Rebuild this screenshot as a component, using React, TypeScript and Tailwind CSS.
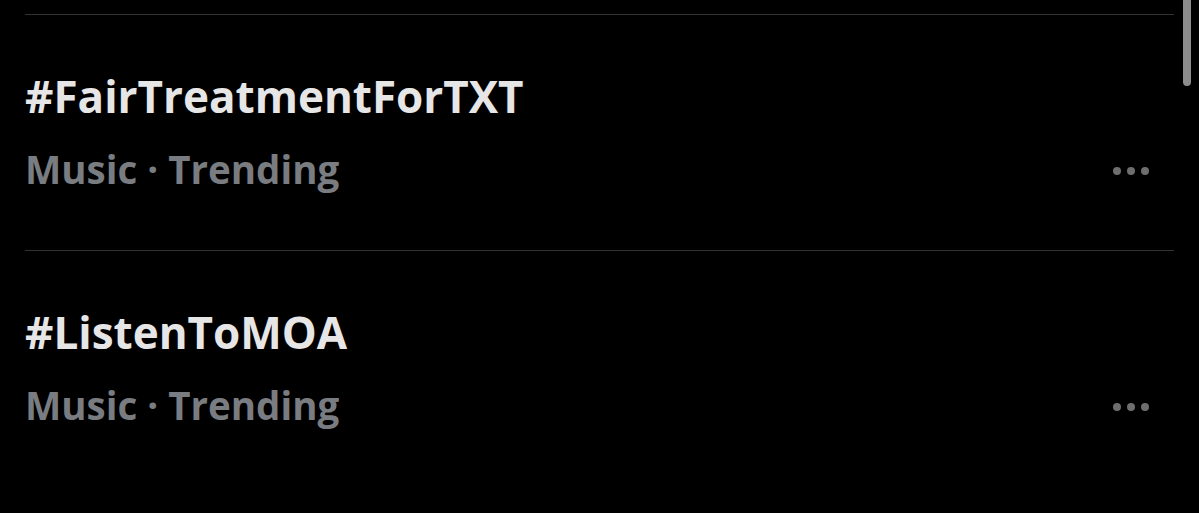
import React from "react";

const Dots = () => (
  <div className="flex items-center gap-[6px] mr-[25px] mt-[4px]">
    <span className="block w-[8px] h-[8px] rounded-full bg-[#6e6e6e]" />
    <span className="block w-[8px] h-[8px] rounded-full bg-[#6e6e6e]" />
    <span className="block w-[8px] h-[8px] rounded-full bg-[#6e6e6e]" />
  </div>
);

const Row = ({ tag }: { tag: string }) => (
  <div className="border-t border-[#2f3336] h-[236px] flex flex-col">
    <div className="pt-[55px] text-[44px] leading-[52px] font-bold text-[#e6e6e6]">{tag}</div>
    <div className="mt-[25px] flex items-center justify-between">
      <span className="text-[38.5px] leading-[44px] font-bold text-[#797c80]">Music · Trending</span>
      <Dots />
    </div>
  </div>
);

export default function App() {
  return (
    <div
      className="w-[1199px] h-[513px] bg-black relative overflow-hidden"
      style={{ fontFamily: '"Open Sans", "Liberation Sans", sans-serif' }}
    >
      <div className="pt-[14px] pl-[25px] pr-[25px]">
        <Row tag="#FairTreatmentForTXT" />
        <Row tag="#ListenToMOA" />
      </div>
      <div className="absolute left-[1183px] top-0 w-[8px] h-[86px] rounded-b-full bg-[#8c8c8c]" />
    </div>
  );
}
